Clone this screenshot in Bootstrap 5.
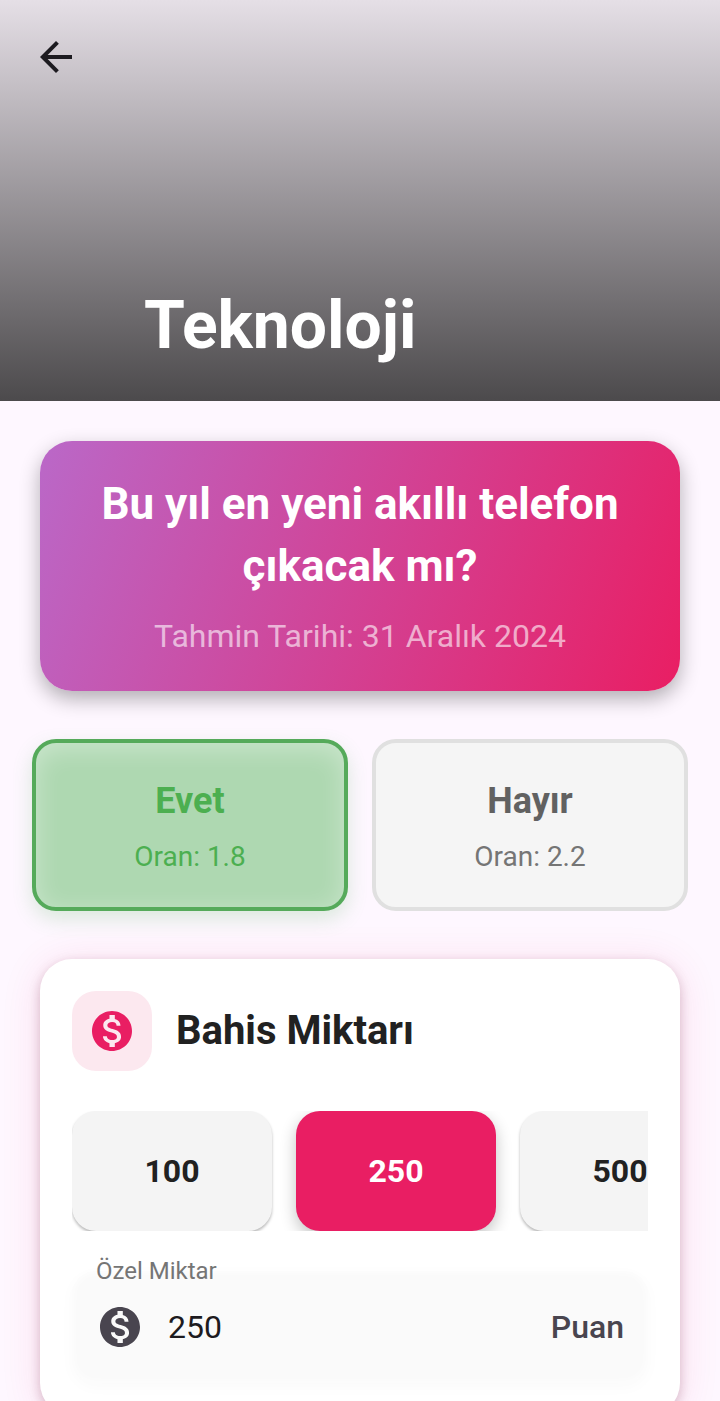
<!DOCTYPE html>
<html lang="tr">
<head>
<meta charset="utf-8">
<meta name="viewport" content="width=device-width, initial-scale=1">
<title>Teknoloji</title>
<link href="https://cdn.jsdelivr.net/npm/bootstrap@5.3.0/dist/css/bootstrap.min.css" rel="stylesheet">
<style>
  body { font-family: Roboto, sans-serif; background: #fef7ff; color: #212121; }
  .screen { overflow-x: hidden; overflow-y: auto; scrollbar-width: none; }
  .screen::-webkit-scrollbar, .amounts::-webkit-scrollbar { display: none; }

  .hero { min-height: 401px; padding: 33px 32px 42px; background: linear-gradient(#e5dfe6, #4c4a4c); }
  .back { color: #1d1b20; }
  .hero-title { font-size: 66px; line-height: 66px; margin-left: 112px; }
  svg { display: block; flex: none; width: 48px; height: 48px; fill: currentColor; }

  .content { padding: 40px; }
  .question { padding: 32px; border-radius: 32px; margin-bottom: 48px;
    background: linear-gradient(111deg, #ba68c8, #e91e63);
    box-shadow: 0 8px 20px rgba(0,0,0,.3); }
  .question h2 { font-size: 44px; line-height: 62px; }
  .question p { font-size: 32px; line-height: 46px; color: rgba(255,255,255,.6); }

  .choices { gap: 24px; margin: 0 -8px 48px; }
  .choice { flex: 1 1 0; padding: 36px 8px 30px; border: 4px solid #e0e0e0; border-radius: 24px;
    background: #f5f5f5; color: #757575; font-size: 28px; line-height: 40px; }
  .choice strong { font-size: 36px; line-height: 44px; margin-bottom: 14px; color: #616161; }
  .choice.selected, .choice.selected strong { color: #4caf50; }
  .choice.selected { border-color: #55aa5a; background: #aed8b1;
    box-shadow: 0 8px 20px rgba(76,175,80,.2), inset 0 6px 26px rgba(255,255,255,.36); }

  .stake { padding: 32px; border-radius: 32px; background: #fff;
    box-shadow: 0 4px 12px rgba(90,20,50,.24), 0 4px 40px rgba(233,30,99,.12); }
  .stake-icon { padding: 16px; border-radius: 24px; background: #fce8ef; color: #e91e63; }
  .stake h2 { font-size: 40px; line-height: 48px; }
  .amounts { gap: 24px; margin: 40px 0; overflow-x: auto; overflow-y: hidden; scrollbar-width: none; }
  .amount { flex: 0 0 200px; height: 120px; border: 0; border-radius: 24px; background: #f4f4f4;
    color: #212121; font-size: 32px; font-weight: 700; box-shadow: 0 2px 3px rgba(0,0,0,.28); }
  .amount.selected { background: #e91e63; color: #fff; box-shadow: 0 6px 16px rgba(0,0,0,.24); }

  .field { height: 112px; padding: 0 24px; border-radius: 24px; background: #fafafa;
    box-shadow: 0 4px 16px rgba(0,0,0,.025), inset 0 0 10px #fff; }
  .field label { top: -14px; left: 24px; font-size: 24px; line-height: 28px; color: #757575; }
  .field input { border: 0; background: none; outline: 0; min-width: 0; padding: 0; margin-left: 24px;
    font-size: 32px; line-height: 40px; color: #1d1b20; }
  .field span { font-size: 32px; line-height: 40px; color: #49454f; }
  .field svg { color: #49454f; }
</style>
</head>
<body>
<svg class="d-none" aria-hidden="true">
  <symbol id="coin" viewBox="0 0 24 24"><path d="M12 2C6.48 2 2 6.48 2 12s4.48 10 10 10 10-4.48 10-10S17.52 2 12 2zm1.41 16.09V20h-2.67v-1.93c-1.71-.36-3.16-1.46-3.27-3.4h1.96c.1 1.05.82 1.87 2.65 1.87 1.96 0 2.4-.98 2.4-1.59 0-.83-.44-1.61-2.67-2.14-2.48-.6-4.18-1.62-4.18-3.67 0-1.72 1.39-2.84 3.11-3.21V4h2.67v1.95c1.86.45 2.79 1.86 2.85 3.39H14.3c-.05-1.11-.64-1.87-2.22-1.87-1.5 0-2.4.68-2.4 1.64 0 .84.65 1.39 2.67 1.91s4.18 1.39 4.18 3.91c-.01 1.83-1.38 2.83-3.12 3.16z"/></symbol>
</svg>
<div class="screen vh-100">
  <header class="hero d-flex flex-column justify-content-between align-items-start">
    <button type="button" class="back btn p-0 border-0" aria-label="Geri">
      <svg viewBox="0 0 24 24"><path d="M20 11H7.83l5.59-5.59L12 4l-8 8 8 8 1.41-1.41L7.83 13H20v-2z"/></svg>
    </button>
    <h1 class="hero-title fw-bold text-white mb-0">Teknoloji</h1>
  </header>

  <main class="content">
    <section class="question text-center">
      <h2 class="fw-bold text-white mb-3">Bu yıl en yeni akıllı telefon çıkacak mı?</h2>
      <p class="mb-0">Tahmin Tarihi: 31 Aralık 2024</p>
    </section>

    <div class="choices d-flex">
      <button type="button" class="choice selected" aria-pressed="true"><strong class="d-block">Evet</strong>Oran: 1.8</button>
      <button type="button" class="choice" aria-pressed="false"><strong class="d-block">Hayır</strong>Oran: 2.2</button>
    </div>

    <section class="stake">
      <div class="d-flex align-items-center gap-4">
        <div class="stake-icon"><svg aria-hidden="true"><use href="#coin"/></svg></div>
        <h2 class="fw-bold mb-0">Bahis Miktarı</h2>
      </div>
      <div class="amounts d-flex">
        <button type="button" class="amount" aria-pressed="false">100</button>
        <button type="button" class="amount selected" aria-pressed="true">250</button>
        <button type="button" class="amount" aria-pressed="false">500</button>
      </div>
      <div class="field position-relative d-flex align-items-center">
        <label class="position-absolute" for="custom">Özel Miktar</label>
        <svg aria-hidden="true"><use href="#coin"/></svg>
        <input class="flex-grow-1" id="custom" type="text" inputmode="numeric" value="250">
        <span class="fw-medium">Puan</span>
      </div>
    </section>
  </main>
</div>
<script src="https://cdn.jsdelivr.net/npm/bootstrap@5.3.0/dist/js/bootstrap.bundle.min.js"></script>
</body>
</html>
